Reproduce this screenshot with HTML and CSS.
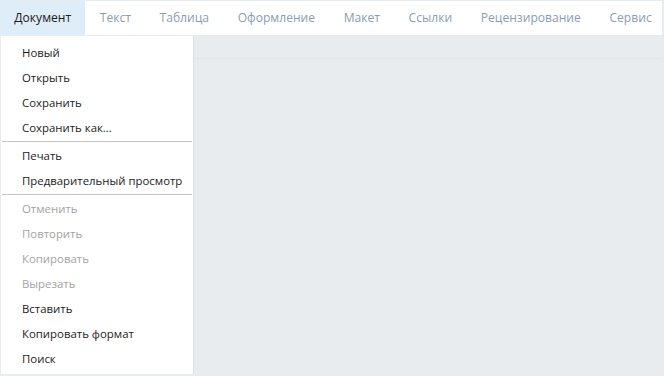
FILE: index.html
```html
<!DOCTYPE html>
<html lang="ru">
<head>
  <meta charset="UTF-8">
  <title>Документ</title>
  <link rel="stylesheet" href="styles.css">
</head>
<body>
  <div class="app">
    <div class="tabs">
      <div class="tab active">Документ</div>
      <div class="tab">Текст</div>
      <div class="tab">Таблица</div>
      <div class="tab">Оформление</div>
      <div class="tab">Макет</div>
      <div class="tab">Ссылки</div>
      <div class="tab">Рецензирование</div>
      <div class="tab">Сервис</div>
    </div>

    <div class="work">
      <div class="menu">
        <div class="item">Новый</div>
        <div class="item">Открыть</div>
        <div class="item">Сохранить</div>
        <div class="item">Сохранить как...</div>
        <div class="sep"></div>
        <div class="item">Печать</div>
        <div class="item">Предварительный просмотр</div>
        <div class="sep"></div>
        <div class="item disabled">Отменить</div>
        <div class="item disabled">Повторить</div>
        <div class="item disabled">Копировать</div>
        <div class="item disabled">Вырезать</div>
        <div class="item">Вставить</div>
        <div class="item">Копировать формат</div>
        <div class="item">Поиск</div>
      </div>
      <div class="area">
        <div class="toolbar"></div>
      </div>
    </div>
  </div>
</body>
</html>
```

FILE: styles.css
```css
* { box-sizing: border-box; }

html, body {
  margin: 0;
  height: 100%;
}

body {
  font-family: 'Open Sans', 'Noto Sans', sans-serif;
  font-size: 11.4px;
  background: #e9ecef;
  color: #1c1c1c;
}

.app {
  height: 376px;
  padding: 1px 2px 0 0;
  display: flex;
  flex-direction: column;
}

.tabs {
  display: flex;
  background: #fff;
  height: 34px;
  flex-shrink: 0;
}

.tab {
  padding: 0 14.3px;
  font-size: 12.1px;
  line-height: 34px;
  color: #8a9db3;
  white-space: nowrap;
}

.tab.active {
  background: #deedf7;
  color: #1c1c1c;
}

.work {
  flex: 1;
  display: flex;
  padding-top: 1px;
  min-height: 0;
}

.menu {
  width: 193px;
  margin-left: 1px;
  margin-bottom: 2px;
  background: #fff;
  padding: 3.5px 0;
  border-right: 1px solid #dde1e5;
}

.item {
  height: 25px;
  line-height: 25px;
  padding-left: 21px;
  white-space: nowrap;
}

.item.disabled {
  color: #a3a3a3;
}

.sep {
  height: 1px;
  margin: 1px 1px;
  background: #c6c6c6;
}

.area {
  flex: 1;
}

.toolbar {
  height: 23px;
  border-bottom: 1px solid #e2e5e9;
}
```
